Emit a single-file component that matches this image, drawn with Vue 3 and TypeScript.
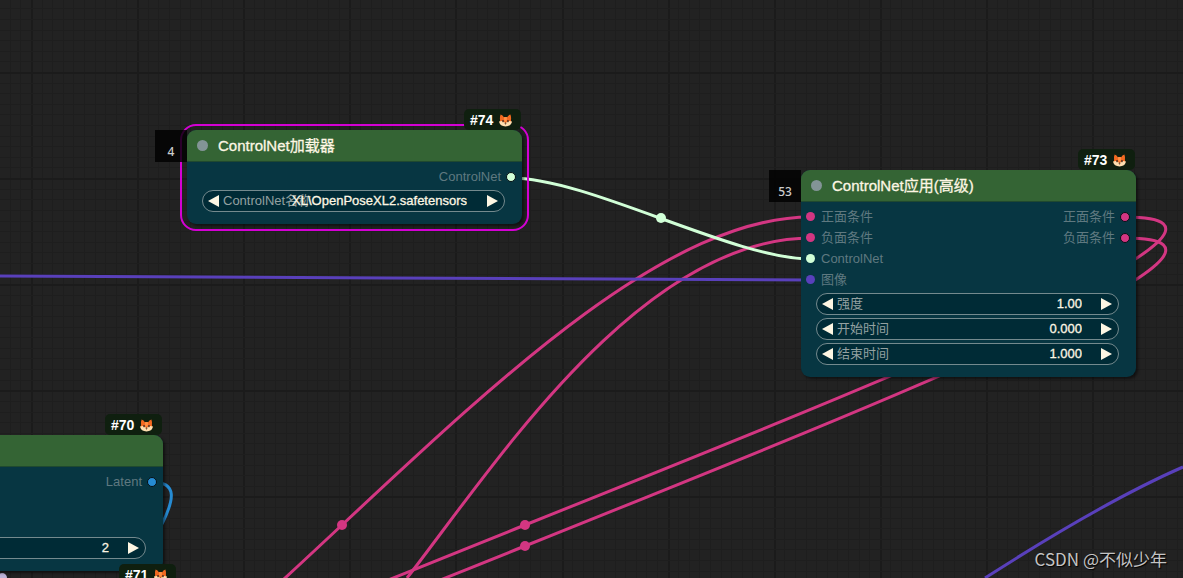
<script setup lang="ts">
interface Slot { name: string; type: string }
interface Widget { kind: 'number' | 'combo'; label: string; value: string }
interface GraphNode {
  id: number
  x: number
  y: number
  title: string
  order?: number
  selected?: boolean
  inputs: Slot[]
  outputs: Slot[]
  rows: number
  widgets: Widget[]
}

const nodes: GraphNode[] = [
  {
    id: 74, x: 187, y: 130, title: 'ControlNet加载器', order: 4, selected: true,
    inputs: [], outputs: [{ name: 'ControlNet', type: 'control' }], rows: 1,
    widgets: [{ kind: 'combo', label: 'ControlNet名称', value: 'XL\\OpenPoseXL2.safetensors' }],
  },
  {
    id: 73, x: 801, y: 170, title: 'ControlNet应用(高级)', order: 53,
    inputs: [
      { name: '正面条件', type: 'cond' },
      { name: '负面条件', type: 'cond' },
      { name: 'ControlNet', type: 'control' },
      { name: '图像', type: 'image' },
    ],
    outputs: [
      { name: '正面条件', type: 'cond' },
      { name: '负面条件', type: 'cond' },
    ],
    rows: 4,
    widgets: [
      { kind: 'number', label: '强度', value: '1.00' },
      { kind: 'number', label: '开始时间', value: '0.000' },
      { kind: 'number', label: '结束时间', value: '1.000' },
    ],
  },
  {
    id: 70, x: -172, y: 435, title: '',
    inputs: [], outputs: [{ name: 'Latent', type: 'latent' }], rows: 3,
    widgets: [{ kind: 'number', label: '', value: '2' }],
  },
  { id: 71, x: -158, y: 585, title: '', inputs: [], outputs: [], rows: 1, widgets: [] },
]

const links = [
  { type: 'cond', d: 'M-127 833 C153 833 531 217 811 217' },
  { type: 'cond', d: 'M407 578 C492 469 640 238 811 238' },
  { type: 'cond', d: 'M1125 217 C1462 217 -412 833 -75 833' },
  { type: 'cond', d: 'M1125 238 C1462 238 -412 854 -75 854' },
  { type: 'image', d: 'M-20 276 C200 276 600 280 811 280' },
  { type: 'image', d: 'M985 578 Q1105 501 1183 467' },
  { type: 'latent', d: 'M152 482 C178 482 174 500 162 524' },
  { type: 'control', d: 'M511 178 C589 178 733 259 811 259' },
]

const joints = [
  { type: 'cond', x: 342, y: 525 },
  { type: 'cond', x: 525, y: 525 },
  { type: 'cond', x: 525, y: 546 },
  { type: 'control', x: 661, y: 218 },
  { type: 'model', x: 2, y: 578 },
]

const STEP = 10.61
const gridLines = (origin: number, first: number, count: number) =>
  Array.from({ length: count }, (_, i) => first + i).map((k) => ({
    at: Math.round(origin + k * STEP),
    major: k % 10 === 0,
  }))
const columns = gridLines(32, -3, 260)
const rowsOfGrid = gridLines(72, -7, 160)
</script>

<template>
  <main class="canvas">
    <svg class="layer" aria-hidden="true">
      <g class="grid">
        <rect v-for="c in columns" :key="'c' + c.at" :x="c.at - 1" y="0" :width="c.major ? 2 : 1" height="100%" :class="{ major: c.major }" />
        <rect v-for="r in rowsOfGrid" :key="'r' + r.at" x="0" :y="r.at" width="100%" :height="r.major ? 2 : 1" :class="{ major: r.major }" />
      </g>
      <path v-for="l in links" :key="l.d" :d="l.d" class="link" :class="l.type" />
      <circle v-for="j in joints" :key="j.x + '-' + j.y" :cx="j.x" :cy="j.y" r="5" class="joint" :class="j.type" />
    </svg>

    <article
      v-for="n in nodes"
      :key="n.id"
      class="node"
      :class="{ selected: n.selected }"
      :style="{ left: n.x + 'px', top: n.y + 'px' }"
    >
      <div v-if="n.order" class="order">{{ n.order }}</div>
      <div class="badge">
        <span>#{{ n.id }}</span>
        <svg class="fox" viewBox="0 0 24 24" aria-hidden="true">
          <path fill="#f26a21" d="M3 1 Q7 2 9 6 Q12 5 15 6 Q17 2 21 1 Q23 6 22 11 L23 16 H1 L2 11 Q1 6 3 1 Z" />
          <path fill="#ff9145" d="M9 6 Q12 5 15 6 L14 14 H10 Z" />
          <path fill="#ffdfb0" d="M0 14 Q7 11 10 15 L12 17 L14 15 Q17 11 24 14 Q22 23 12 23 Q2 23 0 14 Z" />
          <rect x="6" y="11" width="3" height="4" rx="1" fill="#55301f" />
          <rect x="15" y="11" width="3" height="4" rx="1" fill="#55301f" />
          <path fill="#55301f" d="M10 17 H14 L12 20 Z" />
        </svg>
      </div>
      <header class="title"><i class="state"></i><span>{{ n.title }}</span></header>
      <div class="body">
        <div class="slots">
          <ul>
            <li v-for="s in n.inputs" :key="s.name"><i class="pin" :class="s.type"></i>{{ s.name }}</li>
          </ul>
          <ul class="outputs">
            <li v-for="s in n.outputs" :key="s.name">{{ s.name }}<i class="pin" :class="s.type"></i></li>
            <li v-for="k in n.rows - n.outputs.length" :key="k"></li>
          </ul>
        </div>
        <div v-for="(w, i) in n.widgets" :key="i" class="widget">
          <button type="button" aria-label="−"><svg viewBox="0 0 11 12"><path d="M11 0 V12 L0 6 Z" /></svg></button>
          <label :for="'w' + n.id + '-' + i">{{ w.label }}</label>
          <select v-if="w.kind === 'combo'" :id="'w' + n.id + '-' + i"><option>{{ w.value }}</option></select>
          <input v-else :id="'w' + n.id + '-' + i" type="text" :value="w.value" />
          <button type="button" aria-label="+"><svg viewBox="0 0 11 12"><path d="M0 0 V12 L11 6 Z" /></svg></button>
        </div>
      </div>
    </article>

    <p class="credit">CSDN @不似少年</p>
  </main>
</template>

<style>
body { background: #222; overflow: hidden; }
</style>

<style scoped>
.canvas {
  position: relative;
  height: 100vh;
  overflow: hidden;
  background: #222;
  font: 13px/20px "Liberation Sans", "Noto Sans CJK SC", sans-serif;
  color: #fdf6e3;
}
.layer { position: absolute; inset: 0; width: 100%; height: 100%; }
.grid rect { fill: #1e1e1e; }
.grid .major { fill: #1b1b1b; }
.link { fill: none; stroke: currentColor; stroke-width: 3; }
.joint { fill: currentColor; }
.cond { color: #d33682; }
.image { color: #5940bb; }
.control { color: #d1ffd7; }
.latent { color: #268bd2; }
.model { color: #bcb3d8; }

.node {
  position: absolute;
  width: 335px;
  border-radius: 9px;
  background: #073642;
  box-shadow: 2px 2px 3px rgba(0, 0, 0, 0.5);
}
.selected::before {
  content: "";
  position: absolute;
  inset: -6px -7px -7px;
  border: 2px solid #d400d4;
  border-radius: 16px;
}
.order {
  position: absolute;
  right: 100%;
  top: 0;
  box-sizing: border-box;
  width: 32px;
  height: 32px;
  padding-top: 11px;
  background: rgba(0, 0, 0, 0.8);
  color: #ccc;
  font: 500 12px/21px "Noto Sans", sans-serif;
  text-align: center;
}
.badge {
  position: absolute;
  right: 1px;
  bottom: 100%;
  display: flex;
  align-items: center;
  justify-content: space-between;
  box-sizing: border-box;
  width: 57px;
  height: 21px;
  padding: 0 9px 0 6px;
  border-radius: 5px;
  background: #0f1f0f;
  color: #fff;
  font-size: 14px;
  font-weight: bold;
}
.fox { width: 13px; height: 13px; margin-top: 1px; }
.title {
  position: relative;
  display: flex;
  align-items: center;
  gap: 10px;
  box-sizing: border-box;
  height: 32px;
  padding-left: 10px;
  border-bottom: 1px solid #20492f;
  border-radius: 9px 9px 0 0;
  background: #346434;
  font-size: 15px;
  -webkit-text-stroke: 0.3px currentColor;
}
.state { width: 11px; height: 11px; border-radius: 50%; background: #839496; }
.body {
  display: flex;
  flex-direction: column;
  gap: 3px;
  padding: 4px 17px 12px 15px;
}
.slots {
  display: flex;
  justify-content: space-between;
  margin: 0 -11px 0 -10px;
  color: #5f7980;
}
ul { margin: 0; padding: 0; list-style: none; }
li { display: flex; align-items: center; gap: 6px; height: 21px; }
.outputs li { justify-content: flex-end; gap: 5px; }
.pin { width: 9px; height: 9px; border-radius: 50%; background: currentColor; }
.outputs .pin {
  box-sizing: border-box;
  width: 10px;
  height: 10px;
  border: 1px solid #061014;
}
.widget {
  display: flex;
  align-items: center;
  box-sizing: border-box;
  height: 22px;
  padding: 0 6px 0 5px;
  border: 1px solid #748a8e;
  border-radius: 11px;
  background: #002b36;
}
.widget label { width: 0; flex: 1 0 0; padding-left: 4px; color: #93a1a1; white-space: nowrap; }
button { display: flex; padding: 0; border: 0; background: none; }
button svg { width: 11px; height: 12px; fill: #fdf6e3; }
input, select {
  appearance: none;
  height: 20px;
  padding: 0 0 1px;
  border: 0;
  margin: 0 19px 0 0;
  background: none;
  color: #fdf6e3;
  font: inherit;
  text-align: right;
  -webkit-text-stroke: 0.3px currentColor;
}
select { margin-right: 20px; }
input { width: 80px; }
.credit {
  position: absolute;
  right: 16px;
  bottom: 7px;
  margin: 0;
  color: #c4c4c4;
  font: 17px/24px "Noto Sans CJK SC", sans-serif;
  text-shadow: 1px 1px 1px #000;
}
</style>
